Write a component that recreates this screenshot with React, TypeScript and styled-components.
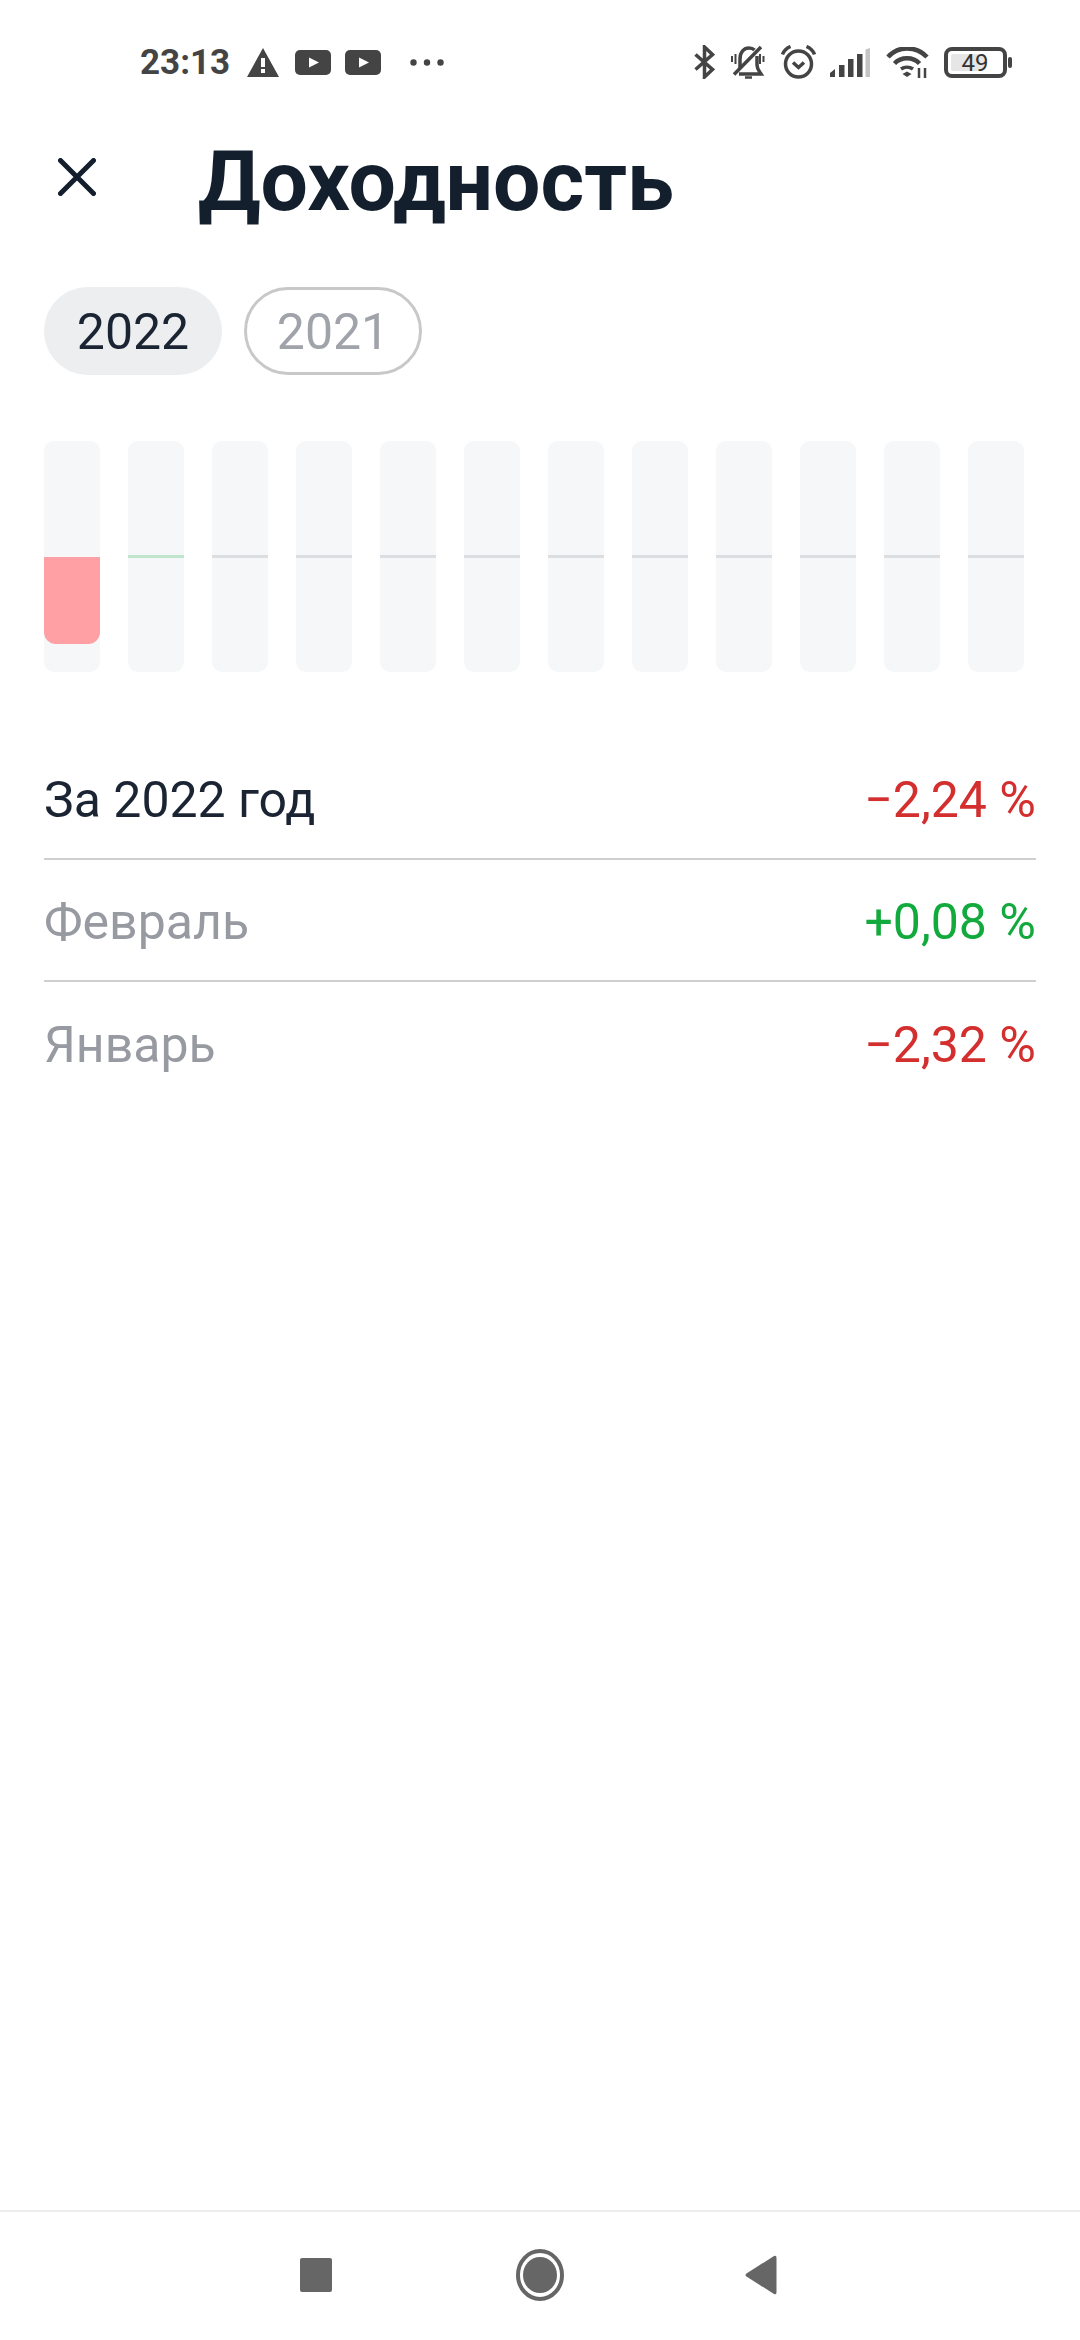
import React from 'react';
import styled, { createGlobalStyle } from 'styled-components';

const GlobalStyle = createGlobalStyle`
  html, body {
    margin: 0;
    padding: 0;
    background: #fff;
  }
  body {
    font-family: Roboto, "Noto Sans", sans-serif;
  }
`;

const Screen = styled.div`
  width: 1080px;
  height: 2340px;
  display: flex;
  flex-direction: column;
  background: #fff;
  overflow: hidden;
`;

const StatusBar = styled.div`
  height: 124px;
  flex-shrink: 0;
  display: flex;
  align-items: center;
  justify-content: space-between;
  padding: 0 68px 0 140px;
  color: #444;
`;

const StatusGroup = styled.div`
  display: flex;
  align-items: center;
`;

const Clock = styled.span`
  font-size: 35px;
  font-weight: 700;
  line-height: 1;
  width: 89px;
  margin-right: 18px;
  white-space: nowrap;
`;

const StatusIcon = styled.svg<{ $gap?: number }>`
  display: block;
  flex-shrink: 0;
  margin-right: ${(props) => props.$gap ?? 0}px;
`;

const Header = styled.header`
  height: 116px;
  flex-shrink: 0;
  display: flex;
  align-items: center;
  padding-left: 58px;
`;

const CloseIcon = styled.svg`
  display: block;
  width: 38px;
  height: 38px;
  margin-right: 102px;
  margin-top: -10px;
`;

const Title = styled.h1`
  margin: 0;
  font-size: 84px;
  font-weight: 700;
  line-height: 1;
  color: #141f2e;
`;

const Tabs = styled.div`
  display: flex;
  gap: 22px;
  padding: 47px 44px 0;
`;

const Tab = styled.div<{ $active?: boolean }>`
  width: 178px;
  height: 88px;
  box-sizing: border-box;
  border-radius: 44px;
  padding-top: 2px;
  display: flex;
  align-items: center;
  justify-content: center;
  font-size: 50px;
  background: ${(props) => (props.$active ? '#eceef0' : '#fff')};
  border: ${(props) => (props.$active ? 'none' : '3px solid #c8c8c8')};
  color: ${(props) => (props.$active ? '#1b2433' : '#a0a3a9')};
`;

const Chart = styled.div`
  display: flex;
  gap: 28px;
  padding: 66px 0 0 44px;
`;

const Track = styled.div`
  width: 56px;
  height: 231px;
  border-radius: 10px;
  background: #f5f7f8;
  padding-top: 114px;
  box-sizing: border-box;
`;

const levelColors = {
  flat: '#dcdfe1',
  gain: '#bfe6cc',
  loss: '#ffa0a5',
};

const Level = styled.div<{ $kind: 'flat' | 'gain' | 'loss' }>`
  height: ${(props) => (props.$kind === 'loss' ? 87 : 3)}px;
  margin-top: ${(props) => (props.$kind === 'loss' ? 2 : 0)}px;
  background: ${(props) => levelColors[props.$kind]};
  border-radius: ${(props) => (props.$kind === 'loss' ? '0 0 12px 12px' : '0')};
`;

const List = styled.div`
  display: flex;
  flex-direction: column;
  padding: 66px 44px 0;
`;

const Row = styled.div`
  height: 122px;
  box-sizing: border-box;
  padding-top: 4px;
  display: flex;
  align-items: center;
  justify-content: space-between;
  font-size: 50px;
  border-bottom: 2px solid #cfcfcf;

  &:last-child {
    border-bottom: none;
  }
`;

const RowLabel = styled.span<{ $muted?: boolean }>`
  color: ${(props) => (props.$muted ? '#979aa1' : '#1b2433')};
`;

const RowValue = styled.span<{ $positive?: boolean }>`
  color: ${(props) => (props.$positive ? '#12aa3c' : '#d32f2f')};
`;

const Spacer = styled.div`
  flex: 1;
`;

const NavBar = styled.nav`
  height: 130px;
  flex-shrink: 0;
  box-sizing: border-box;
  border-top: 2px solid #ececec;
  padding: 0 0 3px 300px;
  display: flex;
  align-items: center;
  color: #666;
`;

const NavIcon = styled.svg<{ $gap?: number }>`
  display: block;
  margin-right: ${(props) => props.$gap ?? 0}px;
`;

const months: Array<'flat' | 'gain' | 'loss'> = [
  'loss', 'gain', 'flat', 'flat', 'flat', 'flat',
  'flat', 'flat', 'flat', 'flat', 'flat', 'flat',
];

const rows = [
  { label: 'За 2022 год', value: '−2,24 %', muted: false, positive: false },
  { label: 'Февраль', value: '+0,08 %', muted: true, positive: true },
  { label: 'Январь', value: '−2,32 %', muted: true, positive: false },
];

const YoutubeIcon = ({ gap }: { gap: number }) => (
  <StatusIcon $gap={gap} width="36" height="25" viewBox="0 0 36 25">
    <rect width="36" height="25" rx="5" fill="currentColor" />
    <path d="M14 7.500 L24 12.500 L14 17.500 Z" fill="#fff" />
  </StatusIcon>
);

const App: React.FC = () => {
  return (
    <Screen>
      <GlobalStyle />
      <StatusBar>
        <StatusGroup>
          <Clock>23:13</Clock>
          <StatusIcon $gap={16} width="32" height="29" viewBox="0 0 32 29">
            <path d="M16 0 L32 29 L0 29 Z" fill="currentColor" />
            <rect x="14" y="10" width="4" height="9" fill="#fff" />
            <rect x="14" y="21" width="4" height="4" fill="#fff" />
          </StatusIcon>
          <YoutubeIcon gap={14} />
          <YoutubeIcon gap={29} />
          <StatusIcon width="34" height="7" viewBox="0 0 34 7">
            <circle cx="3.500" cy="3.500" r="3.200" fill="currentColor" />
            <circle cx="17" cy="3.500" r="3.200" fill="currentColor" />
            <circle cx="30.500" cy="3.500" r="3.200" fill="currentColor" />
          </StatusIcon>
        </StatusGroup>
        <StatusGroup>
          <StatusIcon $gap={16} width="21" height="34" viewBox="0 0 21 34" fill="none" stroke="currentColor" strokeWidth="3.500">
            <path d="M1.500 9.500 L18.500 24.500 L10.500 32 V2 L18.500 9.500 L1.500 24.500" />
          </StatusIcon>
          <StatusIcon $gap={16} width="34" height="34" viewBox="0 0 34 34" fill="none" stroke="currentColor" strokeWidth="3.500">
            <path d="M9 23 V14 C9 7 13 3 18 3 C20 3 22 3.500 23.500 5" />
            <path d="M26 11 V20 C26 24 28 26 30 29 H8" />
            <path d="M3 29.500 L30 2" />
            <path d="M14 32.500 H21" strokeWidth="2.500" />
            <path d="M1 11 V17 M4.500 9 V19 M29 9 V19 M32.500 11 V17" strokeWidth="2" />
          </StatusIcon>
          <StatusIcon $gap={14} width="35" height="34" viewBox="0 0 35 34" fill="none" stroke="currentColor" strokeWidth="3.500">
            <circle cx="17.500" cy="19" r="13" />
            <path d="M12 17.500 L17.500 22.500 L23 17.500" />
            <path d="M1.500 9.500 C3 5.500 6 3 9.500 1.500 M33.500 9.500 C32 5.500 29 3 25.500 1.500" />
          </StatusIcon>
          <StatusIcon $gap={16} width="40" height="29" viewBox="0 0 40 29">
            <path d="M0 29 V25 L5 21 V29 Z" fill="currentColor" />
            <rect x="9" y="17" width="5.500" height="12" fill="currentColor" />
            <rect x="18" y="11" width="5.500" height="18" fill="currentColor" />
            <rect x="27" y="6" width="5.500" height="23" fill="currentColor" />
            <path d="M35.500 1.500 L40 0 V29 H35.500 Z" fill="#c4c4c4" />
          </StatusIcon>
          <StatusIcon $gap={15} width="43" height="31" viewBox="0 0 43 31" fill="none" stroke="currentColor" strokeWidth="4.500">
            <path d="M2 10 C12 -1.500 30 -1.500 41 10" />
            <path d="M8.500 16.500 C15 9.500 27 9.500 33.500 16.500" />
            <path d="M15 22 C18.500 19.500 23.500 19.500 27 22" strokeWidth="3.500" />
            <path d="M16.500 27 L21 24.500 L25.500 27 L21 30 Z" fill="currentColor" stroke="none" />
            <path d="M33 21 V31 M39 21 V31" strokeWidth="2.500" />
          </StatusIcon>
          <StatusIcon width="68" height="31" viewBox="0 0 68 31">
            <rect x="2" y="2" width="59" height="27" rx="6" fill="none" stroke="currentColor" strokeWidth="4" />
            <rect x="7" y="7" width="33" height="17" rx="2" fill="#e6e6e6" />
            <rect x="64" y="10" width="4" height="11" rx="2" fill="currentColor" />
            <text x="31" y="24" textAnchor="middle" fontSize="24" fontFamily="Roboto, sans-serif" fill="#333">49</text>
          </StatusIcon>
        </StatusGroup>
      </StatusBar>

      <Header>
        <CloseIcon viewBox="0 0 38 38" fill="none" stroke="#141f2e" strokeWidth="5" strokeLinecap="round">
          <path d="M2.500 2.500 L35.500 35.500 M35.500 2.500 L2.500 35.500" />
        </CloseIcon>
        <Title>Доходность</Title>
      </Header>

      <Tabs>
        <Tab $active>2022</Tab>
        <Tab>2021</Tab>
      </Tabs>

      <Chart>
        {months.map((kind, i) => (
          <Track key={i}>
            <Level $kind={kind} />
          </Track>
        ))}
      </Chart>

      <List>
        {rows.map((row) => (
          <Row key={row.label}>
            <RowLabel $muted={row.muted}>{row.label}</RowLabel>
            <RowValue $positive={row.positive}>{row.value}</RowValue>
          </Row>
        ))}
      </List>

      <Spacer />

      <NavBar>
        <NavIcon $gap={184} width="32" height="34" viewBox="0 0 32 34">
          <rect width="32" height="34" rx="2" fill="currentColor" />
        </NavIcon>
        <NavIcon $gap={181} width="48" height="52" viewBox="0 0 48 52">
          <ellipse cx="24" cy="26" rx="22" ry="24" fill="none" stroke="currentColor" strokeWidth="4" />
          <ellipse cx="24" cy="26" rx="17" ry="18" fill="currentColor" />
        </NavIcon>
        <NavIcon width="32" height="40" viewBox="0 0 32 40">
          <path d="M1.500 18.500 L29 1 Q31.500 0 31.500 3 V37 Q31.500 40 29 39 L1.500 21.500 Q-0.500 20 1.500 18.500 Z" fill="currentColor" />
        </NavIcon>
      </NavBar>
    </Screen>
  );
};

export default App;
